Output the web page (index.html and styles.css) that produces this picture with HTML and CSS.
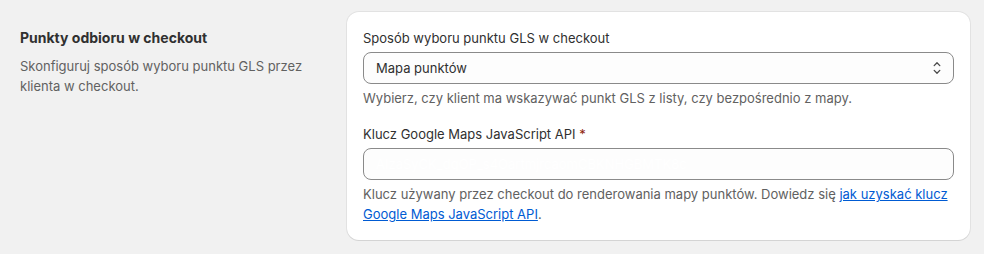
FILE: index.html
```html
<!DOCTYPE html>
<html lang="pl">
<head>
    <meta charset="UTF-8">
    <meta name="viewport" content="width=device-width, initial-scale=1.0">
    <title>Punkty odbioru w checkout</title>
    <link rel="stylesheet" href="styles.css">
</head>
<body>
    <div class="section">
        <div class="annotation">
            <h2>Punkty odbioru w checkout</h2>
            <p>Skonfiguruj sposób wyboru punktu GLS przez klienta w checkout.</p>
        </div>

        <div class="card">
            <div class="field">
                <label for="picker">Sposób wyboru punktu GLS w checkout</label>
                <div class="select">
                    <select id="picker" name="picker">
                        <option value="map" selected>Mapa punktów</option>
                        <option value="list">Lista punktów</option>
                    </select>
                    <svg class="chevron" viewBox="0 0 20 20" width="20" height="20">
                        <path d="M7.2 7.6l2.8-2.8 2.8 2.8M7.2 12.4l2.8 2.8 2.8-2.8" fill="none" stroke="#4a4a4a" stroke-width="1.3" stroke-linecap="round" stroke-linejoin="round"/>
                    </svg>
                </div>
                <p class="help">Wybierz, czy klient ma wskazywać punkt GLS z listy, czy bezpośrednio z mapy.</p>
            </div>

            <div class="field">
                <label for="api_key">Klucz Google Maps JavaScript API <span class="required">*</span></label>
                <input type="text" id="api_key" name="api_key" value="AIzaSyCK_dqOP_s4OartmjrcaomCBKNHGBMTK8c">
                <p class="help">Klucz używany przez checkout do renderowania mapy punktów. Dowiedz się <a href="#">jak uzyskać klucz Google Maps JavaScript API</a>.</p>
            </div>
        </div>
    </div>
</body>
</html>
```

FILE: styles.css
```css
body {
    margin: 0;
    font-family: Inter, "Noto Sans", Arial, sans-serif;
    font-size: 13px;
    line-height: 20px;
    color: #303030;
    background-color: #f1f1f1;
}
.section {
    display: grid;
    grid-template-columns: 307px 1fr;
    gap: 20px;
    padding: 12px 14px 14px 20px;
}
.annotation {
    padding-top: 16px;
}
.annotation h2 {
    margin: 0 0 8px;
    font-size: 14px;
    line-height: 20px;
    font-weight: 650;
}
.annotation p {
    margin: 0;
    color: #616161;
}
.card {
    background-color: #fff;
    border-radius: 12px;
    padding: 16px;
    box-shadow: 0 1px 0 0 rgba(26, 26, 26, 0.07), 0 0 0 1px rgba(0, 0, 0, 0.06);
}
.field + .field {
    margin-top: 16px;
}
label {
    display: block;
    margin-bottom: 4px;
}
.required {
    color: #8e1f0b;
}
.select {
    position: relative;
}
select, input {
    display: block;
    box-sizing: border-box;
    width: 100%;
    height: 32px;
    margin: 0;
    padding: 0 12px;
    font: inherit;
    color: #303030;
    background-color: #fdfdfd;
    border: 1px solid #8a8a8a;
    border-radius: 8px;
    appearance: none;
    outline: none;
}
input {
    color: #fff;
}
.chevron {
    position: absolute;
    right: 7px;
    top: 6px;
    pointer-events: none;
}
.help {
    margin: 4px 0 0;
    color: #616161;
}
.help a {
    color: #005bd3;
    text-decoration: underline;
}
```
